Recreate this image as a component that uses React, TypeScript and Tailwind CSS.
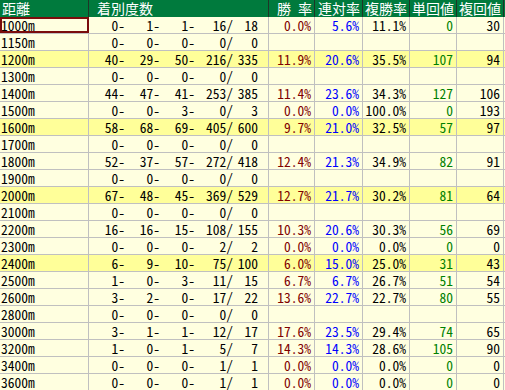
type Row = {
  dist: string;
  counts: string[];
  rates: string[] | null;
  hl?: boolean;
};

const rows: Row[] = [
  { dist: "1000m", counts: ["0", "1", "1", "16", "18"], rates: ["0.0%", "5.6%", "11.1%", "0", "30"] },
  { dist: "1150m", counts: ["0", "0", "0", "0", "0"], rates: null },
  { dist: "1200m", counts: ["40", "29", "50", "216", "335"], rates: ["11.9%", "20.6%", "35.5%", "107", "94"], hl: true },
  { dist: "1300m", counts: ["0", "0", "0", "0", "0"], rates: null },
  { dist: "1400m", counts: ["44", "47", "41", "253", "385"], rates: ["11.4%", "23.6%", "34.3%", "127", "106"] },
  { dist: "1500m", counts: ["0", "0", "3", "0", "3"], rates: ["0.0%", "0.0%", "100.0%", "0", "193"] },
  { dist: "1600m", counts: ["58", "68", "69", "405", "600"], rates: ["9.7%", "21.0%", "32.5%", "57", "97"], hl: true },
  { dist: "1700m", counts: ["0", "0", "0", "0", "0"], rates: null },
  { dist: "1800m", counts: ["52", "37", "57", "272", "418"], rates: ["12.4%", "21.3%", "34.9%", "82", "91"] },
  { dist: "1900m", counts: ["0", "0", "0", "0", "0"], rates: null },
  { dist: "2000m", counts: ["67", "48", "45", "369", "529"], rates: ["12.7%", "21.7%", "30.2%", "81", "64"], hl: true },
  { dist: "2100m", counts: ["0", "0", "0", "0", "0"], rates: null },
  { dist: "2200m", counts: ["16", "16", "15", "108", "155"], rates: ["10.3%", "20.6%", "30.3%", "56", "69"] },
  { dist: "2300m", counts: ["0", "0", "0", "2", "2"], rates: ["0.0%", "0.0%", "0.0%", "0", "0"] },
  { dist: "2400m", counts: ["6", "9", "10", "75", "100"], rates: ["6.0%", "15.0%", "25.0%", "31", "43"], hl: true },
  { dist: "2500m", counts: ["1", "0", "3", "11", "15"], rates: ["6.7%", "6.7%", "26.7%", "51", "54"] },
  { dist: "2600m", counts: ["3", "2", "0", "17", "22"], rates: ["13.6%", "22.7%", "22.7%", "80", "55"] },
  { dist: "2800m", counts: ["0", "0", "0", "0", "0"], rates: null },
  { dist: "3000m", counts: ["3", "1", "1", "12", "17"], rates: ["17.6%", "23.5%", "29.4%", "74", "65"] },
  { dist: "3200m", counts: ["1", "0", "1", "5", "7"], rates: ["14.3%", "14.3%", "28.6%", "105", "90"] },
  { dist: "3400m", counts: ["0", "0", "0", "1", "1"], rates: ["0.0%", "0.0%", "0.0%", "0", "0"] },
  { dist: "3600m", counts: ["0", "0", "0", "1", "1"], rates: ["0.0%", "0.0%", "0.0%", "0", "0"] },
];

const rateCols = [
  { w: "w-[46px]", color: "text-[#800000]" },
  { w: "w-[48px]", color: "text-[#0000ff]" },
  { w: "w-[47px]", color: "text-black" },
  { w: "w-[47px]", color: "text-[#008000]" },
  { w: "w-[47px]", color: "text-black" },
];

const Header = () => (
  <div className="flex h-[17px] bg-[#007a3d] text-white text-[14px] leading-[17px]">
    <div className="w-[89px] shrink-0 border-r border-[#1f3527] pl-[2px]">距離</div>
    <div className="w-[180px] shrink-0 border-r border-[#1f3527] pl-[8px]">着別度数</div>
    <div className="w-[46px] shrink-0 border-r border-[#1f3527] pr-[2px] text-right whitespace-pre">勝 率</div>
    <div className="w-[48px] shrink-0 border-r border-[#1f3527] pr-[2px] text-right">連対率</div>
    <div className="w-[47px] shrink-0 border-r border-[#1f3527] pr-[2px] text-right">複勝率</div>
    <div className="w-[47px] shrink-0 border-r border-[#1f3527] pr-[2px] text-right">単回値</div>
    <div className="w-[47px] shrink-0 border-r border-[#1f3527] pr-[2px] text-right">複回値</div>
  </div>
);

const countWidths = ["w-[36px]", "w-[35px]", "w-[35px]", "w-[38px]", "w-[25px]"];

const DataRow = ({ row, first }: { row: Row; first: boolean }) => {
  const suffix = ["-", "-", "-", "/", ""];
  return (
    <div
      className={`flex h-[17px] border-b border-[#c0c0c0] leading-[16px] ${
        row.hl ? "bg-[#ffff99]" : "bg-[#ffffe0]"
      }`}
    >
      <div
        className={`w-[89px] shrink-0 border-r border-[#c0c0c0] pl-[1px] ${
          first ? "outline-2 -outline-offset-2 outline-[#7a0c0c]" : ""
        }`}
      >
        {row.dist}
      </div>
      <div className="flex w-[180px] shrink-0 border-r border-[#c0c0c0]">
        {row.counts.map((c, i) => (
          <span key={i} className={`${countWidths[i]} shrink-0 text-right whitespace-pre`}>
            {c + suffix[i]}
          </span>
        ))}
      </div>
      {rateCols.map((col, i) => (
        <div
          key={i}
          className={`${col.w} shrink-0 border-r border-[#c0c0c0] pr-[3px] text-right ${col.color}`}
        >
          {row.rates ? row.rates[i] : ""}
        </div>
      ))}
    </div>
  );
};

export default function App() {
  return (
    <div className="w-[505px] h-[390px] overflow-hidden bg-white text-black text-[13.5px] font-['Noto_Sans_Mono_CJK_JP','Noto_Sans_CJK_JP',monospace]">
      <Header />
      {rows.map((row, i) => (
        <DataRow key={row.dist} row={row} first={i === 0} />
      ))}
    </div>
  );
}
